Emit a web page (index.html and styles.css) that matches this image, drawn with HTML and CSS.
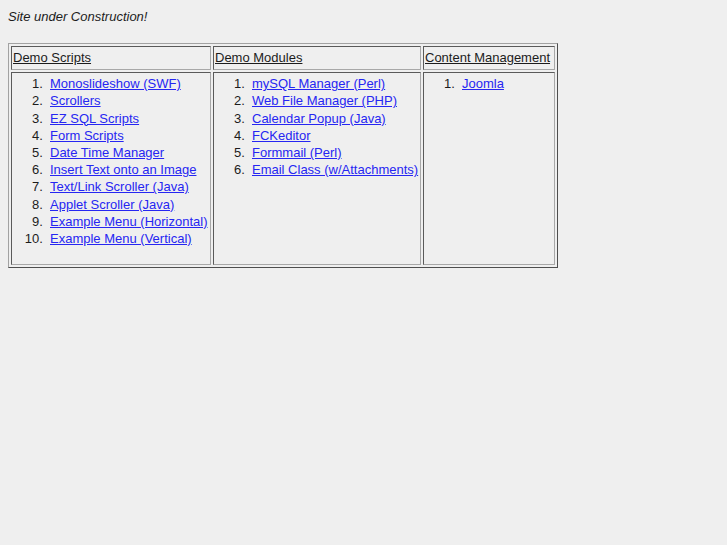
FILE: index.html
```html
<!DOCTYPE html>
<html>
<head>
<meta charset="utf-8">
<title>Site under Construction</title>
<link rel="stylesheet" href="styles.css">
</head>
<body>
<div class="notice">Site under Construction!</div>
<table class="grid">
  <tr class="head">
    <td class="c1"><span class="h">Demo Scripts</span></td>
    <td class="c2"><span class="h">Demo Modules</span></td>
    <td class="c3"><span class="h">Content Management</span></td>
  </tr>
  <tr class="body">
    <td>
      <ol>
        <li><a href="#">Monoslideshow (SWF)</a></li>
        <li><a href="#">Scrollers</a></li>
        <li><a href="#">EZ SQL Scripts</a></li>
        <li><a href="#">Form Scripts</a></li>
        <li><a href="#">Date Time Manager</a></li>
        <li><a href="#">Insert Text onto an Image</a></li>
        <li><a href="#">Text/Link Scroller (Java)</a></li>
        <li><a href="#">Applet Scroller (Java)</a></li>
        <li><a href="#">Example Menu (Horizontal)</a></li>
        <li><a href="#">Example Menu (Vertical)</a></li>
      </ol>
    </td>
    <td>
      <ol>
        <li><a href="#">mySQL Manager (Perl)</a></li>
        <li><a href="#">Web File Manager (PHP)</a></li>
        <li><a href="#">Calendar Popup (Java)</a></li>
        <li><a href="#">FCKeditor</a></li>
        <li><a href="#">Formmail (Perl)</a></li>
        <li><a href="#">Email Class (w/Attachments)</a></li>
      </ol>
    </td>
    <td>
      <ol>
        <li><a href="#">Joomla</a></li>
      </ol>
    </td>
  </tr>
</table>
</body>
</html>
```
FILE: styles.css
```css
html, body {
  background: #efefef;
}
body {
  margin: 8px;
  font-family: "Liberation Sans", Arial, sans-serif;
  font-size: 13px;
  line-height: 17.2px;
  color: #1c1c1c;
}
.notice {
  font-style: italic;
  margin-bottom: 18px;
}
.grid {
  table-layout: fixed;
  width: 550px;
  border-collapse: separate;
  border-spacing: 2px;
  border: 1px solid;
  border-color: #a2a2a2 #4e4e4e #4e4e4e #a2a2a2;
}
.grid td {
  box-sizing: border-box;
  padding: 1px;
  border: 1px solid;
  border-color: #5a5a5a #a8a8a8 #a8a8a8 #5a5a5a;
  vertical-align: top;
}
.grid .c1 { width: 200px; }
.grid .c2 { width: 208px; }
.grid .c3 { width: 132px; }
.head td {
  height: 24px;
  padding: 0 1px 2px;
  vertical-align: middle;
}
.body td {
  height: 193px;
}
.h {
  text-decoration: underline;
  white-space: nowrap;
}
ol {
  margin: 1px 0 15px;
  padding-left: 37px;
}
li::marker {
  content: counter(list-item) ".\00a0\00a0";
}
a {
  color: #2626f2;
  text-decoration: underline;
  white-space: nowrap;
}
```
